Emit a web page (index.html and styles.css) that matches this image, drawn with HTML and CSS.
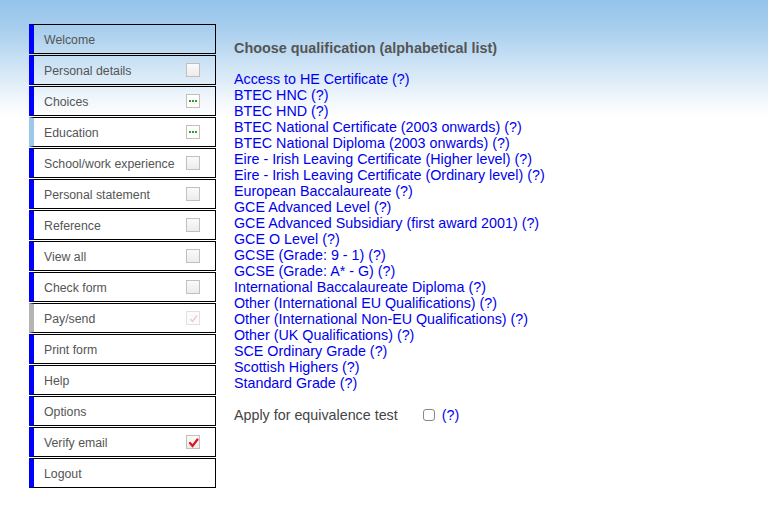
FILE: index.html
```html
<!DOCTYPE html>
<html>
<head>
<meta charset="utf-8">
<link rel="stylesheet" href="styles.css">
</head>
<body>
<div class="page">
  <nav class="nav">
    <div class="item"><span>Welcome</span></div>
    <div class="item"><span>Personal details</span><i class="box"></i></div>
    <div class="item"><span>Choices</span><i class="box dots"><b></b><b></b><b></b></i></div>
    <div class="item light"><span>Education</span><i class="box dots"><b></b><b></b><b></b></i></div>
    <div class="item"><span>School/work experience</span><i class="box"></i></div>
    <div class="item"><span>Personal statement</span><i class="box"></i></div>
    <div class="item"><span>Reference</span><i class="box"></i></div>
    <div class="item"><span>View all</span><i class="box"></i></div>
    <div class="item"><span>Check form</span><i class="box"></i></div>
    <div class="item grey"><span>Pay/send</span><i class="box faded"><svg viewBox="0 0 13 13" width="13" height="13"><path d="M3.5 7 L5.5 9.5 L10 3.5" fill="none" stroke="#f3c6c6" stroke-width="1.3"/></svg></i></div>
    <div class="item"><span>Print form</span></div>
    <div class="item"><span>Help</span></div>
    <div class="item"><span>Options</span></div>
    <div class="item"><span>Verify email</span><i class="box"><svg viewBox="0 0 13 13" width="13" height="13"><path d="M3 7 L5.5 10 L10.5 3.5" fill="none" stroke="#e0141c" stroke-width="2.2" stroke-linecap="round"/></svg></i></div>
    <div class="item"><span>Logout</span></div>
  </nav>
  <main class="main">
    <h1 class="title">Choose qualification (alphabetical list)</h1>
    <ul class="quals">
      <li><a href="#">Access to HE Certificate (?)</a></li>
      <li><a href="#">BTEC HNC (?)</a></li>
      <li><a href="#">BTEC HND (?)</a></li>
      <li><a href="#">BTEC National Certificate (2003 onwards) (?)</a></li>
      <li><a href="#">BTEC National Diploma (2003 onwards) (?)</a></li>
      <li><a href="#">Eire - Irish Leaving Certificate (Higher level) (?)</a></li>
      <li><a href="#">Eire - Irish Leaving Certificate (Ordinary level) (?)</a></li>
      <li><a href="#">European Baccalaureate (?)</a></li>
      <li><a href="#">GCE Advanced Level (?)</a></li>
      <li><a href="#">GCE Advanced Subsidiary (first award 2001) (?)</a></li>
      <li><a href="#">GCE O Level (?)</a></li>
      <li><a href="#">GCSE (Grade: 9 - 1) (?)</a></li>
      <li><a href="#">GCSE (Grade: A* - G) (?)</a></li>
      <li><a href="#">International Baccalaureate Diploma (?)</a></li>
      <li><a href="#">Other (International EU Qualifications) (?)</a></li>
      <li><a href="#">Other (International Non-EU Qualifications) (?)</a></li>
      <li><a href="#">Other (UK Qualifications) (?)</a></li>
      <li><a href="#">SCE Ordinary Grade (?)</a></li>
      <li><a href="#">Scottish Highers (?)</a></li>
      <li><a href="#">Standard Grade (?)</a></li>
    </ul>
    <div class="apply">
      <span class="apply-label">Apply for equivalence test</span>
      <i class="cb"></i>
      <a href="#">(?)</a>
    </div>
  </main>
</div>
</body>
</html>
```
FILE: styles.css
```css
html, body {
  margin: 0;
  padding: 0;
}
body {
  width: 768px;
  height: 506px;
  overflow: hidden;
  font-family: "Liberation Sans", Arial, sans-serif;
  background: linear-gradient(to bottom, #94c3ea 0px, #a9cfee 30px, #d3e6f6 70px, #f2f7fc 100px, #ffffff 118px);
}
.page {
  display: flex;
  padding: 24px 0 0 29px;
}
.nav {
  display: flex;
  flex-direction: column;
  gap: 1px;
  width: 187px;
}
.item {
  box-sizing: border-box;
  height: 30px;
  border: 1px solid #000;
  border-left: 5px solid #0000ff;
  display: flex;
  align-items: center;
  justify-content: space-between;
  padding: 2px 15px 0 10px;
  font-size: 12.3px;
  color: #555;
}
.item.light { border-left-color: #9cc8ea; }
.item.grey { border-left-color: #b4b4b4; }
.box {
  box-sizing: border-box;
  width: 14px;
  height: 14px;
  margin-top: -2px;
  border: 1px solid #c8beb8;
  background: linear-gradient(to bottom, #fafafa, #ececec);
  display: flex;
  align-items: center;
  justify-content: center;
  position: relative;
}
.box svg {
  position: absolute;
  left: 0;
  top: 0;
}
.box.dots {
  gap: 1px;
  background: #fff;
}
.box.dots b {
  width: 2px;
  height: 2px;
  background: #2aa02a;
}
.box.faded {
  border-color: #e4e0dc;
  background: #fbfbfb;
}
.main {
  padding: 16px 0 0 18px;
}
.title {
  margin: 0;
  font-size: 14.4px;
  font-weight: bold;
  color: #555;
  line-height: 16px;
}
.quals {
  list-style: none;
  margin: 15px 0 0;
  padding: 0;
  font-size: 14.3px;
  line-height: 16px;
}
.quals a, .apply a {
  color: #0000ee;
  text-decoration: none;
}
.apply {
  display: flex;
  align-items: center;
  margin-top: 16px;
  font-size: 14.3px;
  line-height: 16px;
  color: #444;
}
.apply-label {
  margin-right: 25px;
}
.cb {
  box-sizing: border-box;
  width: 12px;
  height: 12px;
  border: 1px solid #888;
  border-radius: 3px;
  background: #fff;
  margin-right: 7px;
}
```
